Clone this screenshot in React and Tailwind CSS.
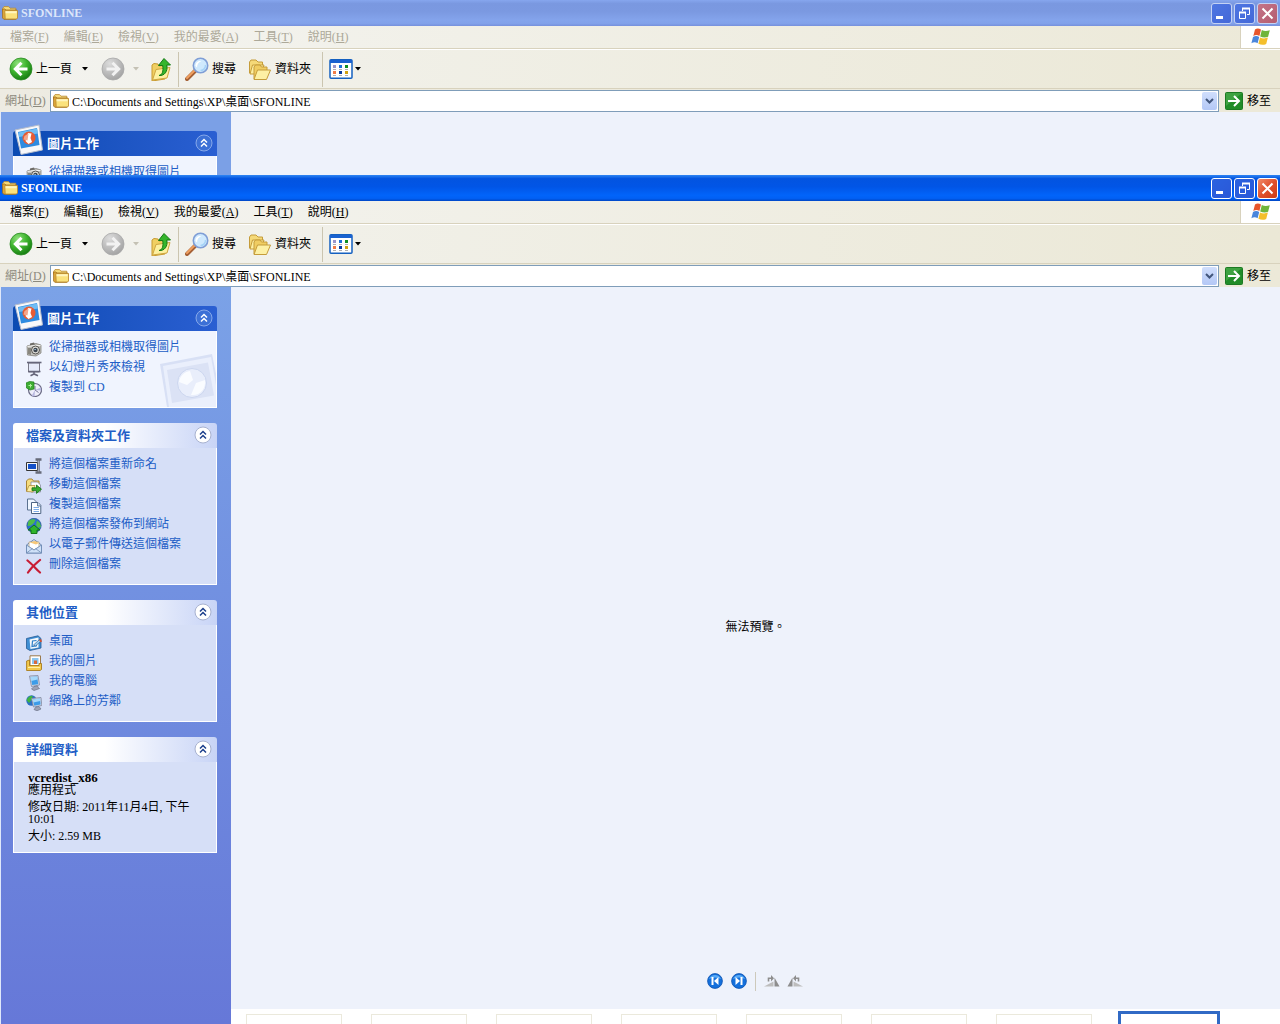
const MENUS = [
  ['檔案', 'F'],
  ['編輯', 'E'],
  ['檢視', 'V'],
  ['我的最愛', 'A'],
  ['工具', 'T'],
  ['說明', 'H'],
]

function FolderIcon({ className = 'w-4 h-4' }) {
  return (
    <svg viewBox="0 0 16 16" className={`shrink-0 ${className}`}>
      <path d="M.6 3.500 2 1.600h4.500L8 3.200h5.800v3H.6z" fill="#f7dc7c" stroke="#b8862c" strokeWidth=".8" />
      <path d="M.6 4v9l1.200 1.300h12l1-.8V5H4L2.800 4z" fill="#e0aa3c" stroke="#a06c18" strokeWidth=".8" />
      <path d="M2.800 5.500h12.700v7.500l-1 1H3.200z" fill="#fbe27c" stroke="#b8862c" strokeWidth=".8" />
      <path d="M3.600 6.300h11v2h-11z" fill="#fff5c0" />
    </svg>
  )
}

function RoundArrow({ forward }) {
  return (
    <svg viewBox="0 0 24 24" className="w-6 h-6 shrink-0">
      <defs>
        <radialGradient id="goGreen" cx=".35" cy=".25" r=".8">
          <stop offset="0" stopColor="#8fe07c" />
          <stop offset=".5" stopColor="#3fb52f" />
          <stop offset="1" stopColor="#147a10" />
        </radialGradient>
        <radialGradient id="goGray" cx=".35" cy=".25" r=".8">
          <stop offset="0" stopColor="#dcdcdc" />
          <stop offset="1" stopColor="#a2a2a2" />
        </radialGradient>
      </defs>
      <circle cx="12" cy="12" r="11" fill={forward ? 'url(#goGray)' : 'url(#goGreen)'} stroke={forward ? '#a8a8a8' : '#2a8a22'} strokeWidth=".8" />
      <path
        d={forward ? 'M5.500 12h12M11.500 5.800l6.200 6.200-6.200 6.200' : 'M18.500 12h-12M12.500 5.800 6.300 12l6.200 6.200'}
        fill="none"
        stroke={forward ? '#f2f2f2' : '#fff'}
        strokeWidth="3"
      />
    </svg>
  )
}

function DownArrow({ className = '' }) {
  return (
    <svg viewBox="0 0 6 4" className={`w-[6px] h-1 shrink-0 ${className}`}>
      <path d="M0 0h6L3 3.500z" fill="currentColor" />
    </svg>
  )
}

function UpFolderIcon() {
  return (
    <svg viewBox="0 0 22 24" className="w-[22px] h-6 shrink-0">
      <path d="M2 8l2-1.500 4 .5 1 2 7-1 1 3-2 11-13 2z" fill="#f0cf62" stroke="#c79a30" />
      <path d="M2.500 23 6 12.500 20 10.500 17 21z" fill="#fdf0a0" stroke="#cfa540" />
      <path d="M9 18.500c3.500-1 4.500-4 3.700-10H8.500L14 1.500l6.500 6.500h-3.700C18 14.500 14.500 19 9 18.500z" fill="#35b52c" stroke="#137a12" />
    </svg>
  )
}

function SearchIcon() {
  return (
    <svg viewBox="0 0 24 24" className="w-6 h-6 shrink-0">
      <path d="M2 22 10.500 13.500" stroke="#a45f34" strokeWidth="4" strokeLinecap="round" />
      <path d="M2 21 9.500 13.500" stroke="#f0a060" strokeWidth="2" strokeLinecap="round" />
      <circle cx="15.500" cy="8.500" r="7.200" fill="#cfe9fd" stroke="#7f9ed6" strokeWidth="1.600" />
      <path d="M10.500 9c0-3.500 2.500-5.500 6-5-2.500 1-4.500 3-4.500 6.500z" fill="#fff" />
      <path d="M20.500 8c.3 3-2 5.500-5 5.500" fill="none" stroke="#a5d3f7" strokeWidth="1.500" />
    </svg>
  )
}

function FoldersIcon() {
  return (
    <svg viewBox="0 0 24 24" className="w-6 h-6 shrink-0">
      <path d="M1.500 16V5L3 3h5l2 2h4.500v3L10 17z" fill="#f5d978" stroke="#c59c3a" />
      <path d="M2 17 4.500 8H16l-3 9z" fill="#fdf0a4" stroke="#c59c3a" />
      <path d="M6 22V10l1.500-2H12l1.500 2H19v3l-2 9z" fill="#f0cd62" stroke="#c59c3a" />
      <path d="M6 22.500 9.500 13H22.500l-4 9.500z" fill="#fdf0a4" stroke="#c59c3a" />
    </svg>
  )
}

function ViewsIcon() {
  return (
    <svg viewBox="0 0 24 20" className="w-6 h-5 shrink-0">
      <rect x="1" y=".8" width="22" height="18.400" rx="1" fill="#fff" stroke="#1460c0" strokeWidth="1.500" />
      <path d="M1 1h22v3H1z" fill="#1a62d0" />
      <path d="M4 6h3v3H4z" fill="#9a96cc" />
      <path d="M10 6h3v3h-3z" fill="#1c70d8" />
      <path d="M16 6h3v3h-3z" fill="#0d8f22" />
      <path d="M4 12h3v3H4z" fill="#f07c48" />
      <path d="M10 12h3v3h-3z" fill="#0a3ca0" />
      <path d="M16 12h3v3h-3z" fill="#d0a010" />
      <path d="M4 10.500h3m3 0h3m3 0h3M4 16.500h3m3 0h3m3 0h3" stroke="#9a9a9a" strokeWidth=".8" />
    </svg>
  )
}

function FlagLogo() {
  return (
    <svg viewBox="0 0 20 18" className="w-5 h-[18px]">
      <path d="M4 1.500C6 .2 8 .4 10 1.600L8.400 8C6.500 6.800 4.500 6.700 2.300 8z" fill="#e8562c" />
      <path d="M10.800 2c2.500 1.300 5 1.300 8 .2l-1.700 6.500c-2.500 1.200-5.300 1-7.900-.3z" fill="#6fb53a" />
      <path d="M2 9c2-1.200 4.200-1.200 6.200-.1L6.600 15.300C4.600 14 2.500 14.100.4 15.300z" fill="#4a86dc" />
      <path d="M9 9.400c2.500 1.300 5.200 1.300 7.900.2l-1.700 6.300c-2.500 1.300-5.200 1.200-7.800-.2z" fill="#f4bf2c" />
    </svg>
  )
}

function PolaroidIcon() {
  return (
    <svg viewBox="0 0 30 32" className="absolute left-[1px] -top-[7px] w-[30px] h-8">
      <path d="M1 6 25 1l3.500 25L7 30.500z" fill="#f8f8fa" stroke="#b4bccc" />
      <path d="M4 8 23 4l2.500 17L7 24.500z" fill="#2f8be0" />
      <path d="M4.500 8.500 23 4.500l.8 5L5.200 13z" fill="#70bdf4" />
      <circle cx="15" cy="14" r="6.500" fill="#e65c34" />
      <path d="M14 9l3.500.5-1 4.500 1.500 4-3.500 2-3-3z" fill="#fff" />
      <path d="M14.500 9.500l-4 2.500-1 3.500 4 1z" fill="#f4a68c" />
    </svg>
  )
}

function PolaroidWatermark() {
  return (
    <svg viewBox="0 0 56 54" className="absolute right-0 bottom-0 w-14 h-[54px]">
      <path d="M0 11 52 1l4 20v33H7z" fill="#d8e0f5" />
      <path d="M3 13 51 4l5 28v22H9z" fill="#eaeffc" />
      <path d="M7 17 48 9.500l6 33L12 50z" fill="#dbe2f5" />
      <circle cx="32" cy="30" r="14.500" fill="#e9eefb" stroke="#ccd6ef" />
      <path d="M30 18c-6 1-10 5-11 11l8 3 6-5zM45 27l-9 3-5 12c9 1 15-6 14-15z" fill="#fafcff" />
    </svg>
  )
}

const TASK_ICONS = {
  camera: (
    <>
      <path d="M1 5 10 2.500 15 4v8l-5 3-8.500-1z" fill="#c2c1bd" stroke="#77756f" strokeWidth=".7" />
      <path d="M1.500 5.500 9 4.500h5.500" stroke="#f2f2f0" fill="none" />
      <path d="M2 7v6l3 1V7z" fill="#88867e" />
      <path d="M4 2.500 8 1.500l1 2-5 .8z" fill="#6c6a66" />
      <circle cx="9.500" cy="9" r="4" fill="#dddcd8" stroke="#55534f" />
      <circle cx="9.500" cy="9" r="2.200" fill="#3d4650" />
      <path d="M8.500 8h1.200v1H8.500z" fill="#b8d8f4" />
    </>
  ),
  slides: (
    <>
      <path d="M2.500 2h11v9h-11z" fill="#e6ebfa" stroke="#7a7a88" />
      <path d="M1 1.500h14.500" stroke="#66667a" strokeWidth="1.600" />
      <path d="M2 10.500h12.500" stroke="#66667a" strokeWidth="1.500" />
      <path d="M8 11v2.500M4.500 14.800 8 13l4 1.800" stroke="#66667a" strokeWidth="1.600" fill="none" />
    </>
  ),
  disc: (
    <>
      <circle cx="9" cy="9" r="6.500" fill="#eeeefa" stroke="#6a6a84" strokeWidth="1.200" />
      <path d="M9 9l6-2.500.3 3zM9 9l-3.500 6 3 .6z" fill="#b8b8e0" />
      <path d="M9 5v4l3.500 2.500" fill="none" stroke="#77779a" />
      <path d="M0 2 3.500.5 8 1v7L4 9 .5 7z" fill="#3fae34" stroke="#1d7d18" strokeWidth=".7" />
      <path d="M2.500 4.500h3.500M4.500 3v3.500" stroke="#b0ec9c" />
    </>
  ),
  rename: (
    <>
      <path d="M.5 4.500h11v8H.5z" fill="#f6f6f6" stroke="#333" />
      <path d="M2 6h8v5H2z" fill="#1450c8" />
      <path d="M9.500 1.500h6M12.500 1.500v13M9.500 14.500h6" stroke="#666a78" strokeWidth="2.400" />
      <path d="M12.500 2.500v11" stroke="#b8bccc" strokeWidth=".8" />
    </>
  ),
  move: (
    <>
      <path d="M.5 13V3l2-2h3.500L7.500 3H13v9.500z" fill="#f6dc7e" stroke="#a88434" />
      <path d="M5 4h6.500l3 3v7H5z" fill="#fdfdfd" stroke="#777f8c" strokeWidth=".7" />
      <path d="M.5 13.500 3 7.500h6L7 14z" fill="#fdeea0" stroke="#a88434" strokeWidth=".7" />
      <path d="M6 9.800h4.500V7l5 4.200-5 4.200v-2.800H6z" fill="#38ac2e" stroke="#136f12" strokeWidth=".8" />
    </>
  ),
  copy: (
    <>
      <path d="M1.500 1h6l2.500 2.500V12H1.500z" fill="#eef5ff" stroke="#5b7290" />
      <path d="M5.500 4.500h6.500l2.800 2.800v8.200H5.500z" fill="#fff" stroke="#4d6584" />
      <path d="M11.500 4.500V8h3.300" fill="#c4d8f4" stroke="#4d6584" strokeWidth=".8" />
      <path d="M7.500 9.500h5.500M7.500 11.500h5.500M7.500 13.500h5.500" stroke="#6fa4e4" strokeWidth=".9" />
    </>
  ),
  publish: (
    <>
      <circle cx="8" cy="7.500" r="7.200" fill="#2b6fd0" stroke="#1b4a86" strokeWidth=".6" />
      <path d="M2.500 3c2-2 6-2.500 7-1L8 5 5 7.500 1.500 8zM11 2.500l3 2.500 1 4-3 1-2-3z" fill="#4fbe48" />
      <path d="M8 7 14 12h-3v3.500H5V12H2z" fill="#2fb42c" stroke="#0d6e10" strokeWidth=".9" />
    </>
  ),
  mail: (
    <>
      <path d="M.5 7 8 1.500 15.500 7v8H.5z" fill="#dce9fa" stroke="#6f8bb4" />
      <path d="M3 4h10v6l-5 2-5-2z" fill="#fff" stroke="#b09a6c" strokeWidth=".7" />
      <path d="M4 4.500 9 3l4 2-3 1.500z" fill="#f7c878" />
      <path d="M.5 7 8 12l7.500-5v8H.5z" fill="#cfe1f8" stroke="#6f8bb4" strokeWidth=".9" />
      <path d="M.5 15l6-4.500M15.500 15l-6-4.500" stroke="#6f8bb4" strokeWidth=".8" />
    </>
  ),
  remove: <path d="M1.500 2.500C6 6 10 11 14 14.500M14 2C9 6 5 10 2 14.500" stroke="#c81c34" strokeWidth="2.200" fill="none" strokeLinecap="round" />,
  desktop: (
    <>
      <path d="M.5 3.500 12 .8l3 2.700v9.500L4 15.500.5 13.500z" fill="#3f8fd4" stroke="#245a94" strokeWidth=".8" />
      <path d="M3.500 4.500 12.500 2.500v10L4.500 14z" fill="#f4f8fc" />
      <path d="M10.500 5.500 6.500 6 6 11.500l5-.8" fill="none" stroke="#2b7fc8" strokeWidth="1.200" />
      <path d="M7.500 10 13.500 4.500l1.500 1.500-5.500 5z" fill="#9fd2f6" stroke="#1c5088" strokeWidth=".6" />
      <path d="M13 5 15 4l1 2.500-1.500.8z" fill="#d8502c" />
    </>
  ),
  pictures: (
    <>
      <path d="M4 .8h10.500v11H4z" fill="#fff" stroke="#9a7a4c" />
      <path d="M6 3h6.500v6H6z" fill="#8cc6f0" />
      <path d="M8 5.500h3V9H8z" fill="#d86a3c" />
      <path d="M.6 6 3.500 5v5.500H13V8.500h2.500v6L14 15.500H.6z" fill="#f3c94c" stroke="#a87c1c" strokeWidth=".9" />
      <path d="M2 12.500h12" stroke="#fdf0a8" />
    </>
  ),
  computer: (
    <>
      <path d="M3.500 1 12 .5l1.500 9.500L5.500 11.500z" fill="#d4d9e6" stroke="#8088a0" strokeWidth=".8" />
      <path d="M4.500 2 11.200 1.500l1 7.700-6 .8z" fill="#3c9ce8" />
      <path d="M4.500 2 11.200 1.500l.4 3L5.200 6z" fill="#a4d8fb" />
      <path d="M8 11.500 11.500 11l.8 1.500 1.200 1L8 15.500 5.500 14z" fill="#9da2b6" stroke="#6c7288" strokeWidth=".7" />
    </>
  ),
  network: (
    <>
      <circle cx="5.500" cy="5.500" r="5.200" fill="#2c70c4" />
      <path d="M.6 5c1-3 4-4.500 6-4.300L6 4 3 8z" fill="#3fb440" />
      <path d="M5.500 3.500 15 2.500l.8 8L7.500 12z" fill="#d4d9e6" stroke="#8088a0" strokeWidth=".8" />
      <path d="M6.700 4.500 14 3.600l.6 6L8.300 10.700z" fill="#3c9ce8" />
      <path d="M6.700 4.500 14 3.600l.2 2.500L7.300 7.500z" fill="#a4d8fb" />
      <path d="M10 12l3-.5 2 2.500-4 1.800L8 14.500z" fill="#9da2b6" stroke="#6c7288" strokeWidth=".7" />
    </>
  ),
}

function TaskItem({ icon, children }) {
  return (
    <li>
      <a href="#" className="flex h-5 items-center gap-[7px] text-[#215dc6]">
        <svg viewBox="0 0 16 16" className="mt-[3px] w-4 h-4 shrink-0">{TASK_ICONS[icon]}</svg>
        <span className="whitespace-nowrap">{children}</span>
      </a>
    </li>
  )
}

function Chevron({ primary }) {
  return (
    <svg viewBox="0 0 18 18" className="w-[18px] h-[18px]">
      <circle cx="9" cy="9" r="8" fill={primary ? '#3c70d6' : '#fff'} stroke={primary ? '#86a8ea' : '#a8b2d0'} />
      <path d="M6 8.500 9 5.500l3 3M6 12.500l3-3 3 3" fill="none" stroke={primary ? '#fff' : '#1c3f8c'} strokeWidth="1.500" />
    </svg>
  )
}

function Panel({ title, primary, watermark, children }) {
  return (
    <section>
      <header
        className={`relative flex h-[25px] items-center justify-between rounded-t-[3px] bg-linear-to-r ${
          primary ? 'pl-[34px] pr-[4px] text-white from-[#0a4ab2] to-[#2a5fd2]' : 'pl-[13px] pr-[5px] text-[#215dc6] from-white from-45% to-[#c8d4f6]'
        }`}
      >
        {primary && <PolaroidIcon />}
        <h2 className="text-[13px] leading-5 font-bold">{title}</h2>
        <button type="button" aria-label={title} className="mb-[2px]">
          <Chevron primary={primary} />
        </button>
      </header>
      <div className={`relative border border-t-0 border-white ${primary ? 'bg-[#f0f4fe]' : 'bg-[#d6dff7]'}`}>
        {watermark && <PolaroidWatermark />}
        <div className="relative">{children}</div>
      </div>
    </section>
  )
}

// A covered window only shows the top of its first panel.
function Sidebar({ covered }) {
  return (
    <aside
      className={`flex w-[231px] shrink-0 flex-col gap-[15px] border-l border-[#dfe8fa] pt-[19px] pr-[14px] pl-3 ${
        covered ? 'bg-[#7ba0e6]' : 'pb-4 bg-linear-to-b from-[#7ba2e7] to-[#6678d8]'
      }`}
    >
      <Panel title="圖片工作" primary watermark={!covered}>
        <ul className="pt-[6px] pb-[10px] pl-3">
          <TaskItem icon="camera">從掃描器或相機取得圖片</TaskItem>
          {!covered && (
            <>
              <TaskItem icon="slides">以幻燈片秀來檢視</TaskItem>
              <TaskItem icon="disc">複製到 CD</TaskItem>
            </>
          )}
        </ul>
      </Panel>
      {!covered && (
        <>
          <Panel title="檔案及資料夾工作">
            <ul className="pt-[6px] pb-[10px] pl-3">
              <TaskItem icon="rename">將這個檔案重新命名</TaskItem>
              <TaskItem icon="move">移動這個檔案</TaskItem>
              <TaskItem icon="copy">複製這個檔案</TaskItem>
              <TaskItem icon="publish">將這個檔案發佈到網站</TaskItem>
              <TaskItem icon="mail">以電子郵件傳送這個檔案</TaskItem>
              <TaskItem icon="remove">刪除這個檔案</TaskItem>
            </ul>
          </Panel>
          <Panel title="其他位置">
            <ul className="pt-[6px] pb-[10px] pl-3">
              <TaskItem icon="desktop">桌面</TaskItem>
              <TaskItem icon="pictures">我的圖片</TaskItem>
              <TaskItem icon="computer">我的電腦</TaskItem>
              <TaskItem icon="network">網路上的芳鄰</TaskItem>
            </ul>
          </Panel>
          <Panel title="詳細資料">
            <div className="flex flex-col gap-[5px] px-[14px] py-[10px] leading-3 text-black">
              <div>
                <p className="text-[13px] leading-3 font-bold">vcredist_x86</p>
                <p>應用程式</p>
              </div>
              <p>修改日期: 2011年11月4日, 下午 10:01</p>
              <p>大小: 2.59 MB</p>
            </div>
          </Panel>
        </>
      )}
    </aside>
  )
}

function TitleBar({ active }) {
  const blue = active
    ? 'from-[#2a62e0] to-[#2a58d8]'
    : 'from-[#4e76e2] to-[#4468d8]'
  const button = 'flex h-[21px] w-[21px] items-center justify-center rounded-[3px] border bg-linear-to-br'
  const edge = active ? 'border-white' : 'border-[#c4d2f4]'
  return (
    <header
      className={`flex h-[26px] shrink-0 items-center px-[2px] ${
        active
          ? 'text-white bg-[linear-gradient(180deg,#2f86f4_0%,#0354e0_14%,#0155e6_45%,#0164fa_78%,#0160f4_90%,#0046c4_100%)]'
          : 'text-[#dce6fa] bg-[linear-gradient(180deg,#86a6ee_0%,#7a98e0_14%,#7b99e1_45%,#84a4ec_78%,#82a2ea_90%,#7690dc_100%)]'
      }`}
    >
      <FolderIcon />
      <h1 className="ml-[3px] flex-1 text-[12px] leading-4 font-bold">SFONLINE</h1>
      <div className="flex gap-[2px]">
        <button type="button" aria-label="最小化" className={`${button} ${edge} ${blue}`}>
          <svg viewBox="0 0 19 19" className="w-[19px] h-[19px]">
            <path d="M4 12h7v3H4z" fill="#fff" />
          </svg>
        </button>
        <button type="button" aria-label="還原" className={`${button} ${edge} ${blue}`}>
          <svg viewBox="0 0 19 19" className="w-[19px] h-[19px]" fill="none" stroke="#fff">
            <path d="M7.500 7V4.500h7v6H12" />
            <path d="M7 4.500h8" strokeWidth="2" />
            <path d="M4.500 8.500h6v6h-6z" />
            <path d="M4 8.500h7" strokeWidth="2" />
          </svg>
        </button>
        <button
          type="button"
          aria-label="關閉"
          className={`${button} ${edge} ${active ? 'from-[#f08a68] via-[#e0502c] to-[#cc3c14]' : 'from-[#c47488] to-[#b45c70]'}`}
        >
          <svg viewBox="0 0 19 19" className="w-[19px] h-[19px]">
            <path d="M4.500 4.500l10 10M14.500 4.500l-10 10" stroke="#fff" strokeWidth="2" />
          </svg>
        </button>
      </div>
    </header>
  )
}

function MenuBar({ active }) {
  return (
    <div className="flex h-[23px] shrink-0 border-b border-[#d8d2bd] bg-linear-to-r from-[#f4f4f1] to-[#ece9d8]">
      <nav className={`flex flex-1 items-center gap-[15px] pl-[10px] ${active ? 'text-black' : 'text-[#aca899]'}`}>
        {MENUS.map(([label, key]) => (
          <button type="button" key={key} className="whitespace-nowrap">
            {label}(<u>{key}</u>)
          </button>
        ))}
      </nav>
      <div className="flex w-10 items-center justify-center border-l border-[#d8d2bd] bg-white">
        <FlagLogo />
      </div>
    </div>
  )
}

function ToolBar() {
  return (
    <div className="flex h-10 shrink-0 items-center border-t border-b border-t-white border-b-[#d8d2bd] bg-linear-to-r from-[#f3f3ef] to-[#ebe8d6] pl-[9px] text-black">
      <button type="button" className="flex items-center gap-[3px]">
        <RoundArrow />
        上一頁
      </button>
      <DownArrow className="ml-[10px]" />
      <button type="button" aria-label="下一頁" className="ml-[13px]">
        <RoundArrow forward />
      </button>
      <DownArrow className="ml-2 text-[#c4c1b4]" />
      <button type="button" aria-label="上一層" className="ml-[11px]">
        <UpFolderIcon />
      </button>
      <span className="ml-[6px] h-[35px] w-px bg-[#cbc5b0]" />
      <button type="button" className="ml-[6px] flex items-center gap-[3px]">
        <SearchIcon />
        搜尋
      </button>
      <button type="button" className="ml-3 flex items-center gap-[3px]">
        <FoldersIcon />
        資料夾
      </button>
      <span className="ml-[11px] h-[35px] w-px bg-[#cbc5b0]" />
      <button type="button" aria-label="檢視" className="ml-[6px] flex items-center gap-[2px]">
        <ViewsIcon />
        <DownArrow />
      </button>
    </div>
  )
}

function AddressBar({ id }) {
  return (
    <div className="flex h-[23px] shrink-0 items-center bg-linear-to-r from-[#edebe2] to-[#ece9d8] pr-[9px] pl-[5px]">
      <label htmlFor={id} className="w-[45px] whitespace-nowrap text-[#8c897c]">
        網址(<u>D</u>)
      </label>
      <div className="flex h-[22px] flex-1 items-center border border-[#7f9db9] bg-white pr-px pl-[2px]">
        <FolderIcon />
        <input
          id={id}
          type="text"
          defaultValue="C:\Documents and Settings\XP\桌面\SFONLINE"
          className="ml-[3px] h-5 flex-1 bg-transparent text-[12px] text-black outline-none"
        />
        <button type="button" aria-label="位址清單" className="flex h-[18px] w-[15px] items-center justify-center rounded-[2px] bg-linear-to-b from-[#d0defc] to-[#b4c8f6]">
          <svg viewBox="0 0 9 6" className="w-[9px] h-[6px]">
            <path d="M1 1l3.500 3.500L8 1" fill="none" stroke="#42567c" strokeWidth="2" />
          </svg>
        </button>
      </div>
      <button type="button" className="ml-[6px] flex items-center gap-1 text-black">
        <svg viewBox="0 0 18 18" className="w-[18px] h-[18px]">
          <rect x=".5" y=".5" width="17" height="17" rx="1" fill="#218c28" stroke="#1c7a22" />
          <path d="M1 1h16L1 14z" fill="#5cb85a" opacity=".5" />
          <path d="M3 9h10.500M9 4l5 5-5 5" fill="none" stroke="#fff" strokeWidth="2" />
        </svg>
        移至
      </button>
    </div>
  )
}

function SkipIcon({ next }) {
  return (
    <svg viewBox="0 0 16 16" className="w-4 h-4">
      <circle cx="8" cy="8" r="7.400" fill="#1470dc" stroke="#0a50b0" strokeWidth=".8" />
      <path d="M2 6a6.500 6.500 0 0 1 12 0C10 4 6 4 2 6z" fill="#58aaf6" />
      <path d={next ? 'M4.500 4v8L9 8zM9.500 4h2v8h-2z' : 'M11.500 4v8L7 8zM4.500 4h2v8h-2z'} fill="#fff" />
    </svg>
  )
}

function RotateIcon({ left }) {
  return (
    <svg viewBox="0 0 16 12" className="w-4 h-3">
      {left ? (
        <>
          <path d="M5.500 2.500v9H.5z" fill="#8e8e8e" />
          <path d="M6.500 6.500v5H16z" fill="#bdbdbd" />
          <path d="M8.500 3.200h3V6.500" fill="none" stroke="#8e8e8e" strokeWidth="1.600" />
          <path d="M9 0v6.400L6 3.200z" fill="#8e8e8e" />
        </>
      ) : (
        <>
          <path d="M10.500 2.500v9h5z" fill="#8e8e8e" />
          <path d="M9.500 6.500v5H0z" fill="#bdbdbd" />
          <path d="M7.500 3.200h-3V6.500" fill="none" stroke="#8e8e8e" strokeWidth="1.600" />
          <path d="M7 0v6.400l3-3.200z" fill="#8e8e8e" />
        </>
      )}
    </svg>
  )
}

function Preview() {
  return (
    <main className="flex min-w-0 flex-1 flex-col bg-[#eef2fb]">
      <p className="flex flex-1 items-center justify-center text-black">無法預覽。</p>
      <div className="mb-[14px] flex h-7 items-center justify-center pr-[2px]">
        <button type="button" aria-label="上一個影像"><SkipIcon /></button>
        <button type="button" aria-label="下一個影像" className="ml-2"><SkipIcon next /></button>
        <span className="ml-2 h-[19px] w-px bg-[#cdc9bb]" />
        <button type="button" aria-label="順時針旋轉" className="ml-2"><RotateIcon /></button>
        <button type="button" aria-label="逆時針旋轉" className="ml-[7px]"><RotateIcon left /></button>
      </div>
      <div className="flex h-[15px] gap-[29px] overflow-hidden bg-white pt-[5px] pl-[15px]">
        {[1, 2, 3, 4, 5, 6, 7].map(n => (
          <div key={n} className="h-24 w-24 shrink-0 border border-[#ebe9dc]" />
        ))}
        <div className="h-24 w-24 shrink-0 outline-3 outline-[#316ac5]" />
      </div>
    </main>
  )
}

function ExplorerWindow({ id, active, className = '' }) {
  return (
    <div className={`flex flex-col ${className}`}>
      <TitleBar active={active} />
      <MenuBar active={active} />
      <ToolBar />
      <AddressBar id={id} />
      <div className="flex flex-1">
        <Sidebar covered={!active} />
        {active ? <Preview /> : <main className="flex-1 bg-[#eef2fb]" />}
      </div>
    </div>
  )
}

export default function App() {
  return (
    <div className="flex h-screen flex-col overflow-hidden bg-[#ece9d8] font-['Liberation_Serif','Noto_Sans_CJK_TC',serif] text-[12px] leading-4">
      <div className="h-[175px] shrink-0 overflow-hidden">
        <ExplorerWindow id="address-back" />
      </div>
      <ExplorerWindow id="address-front" active className="flex-1" />
    </div>
  )
}
